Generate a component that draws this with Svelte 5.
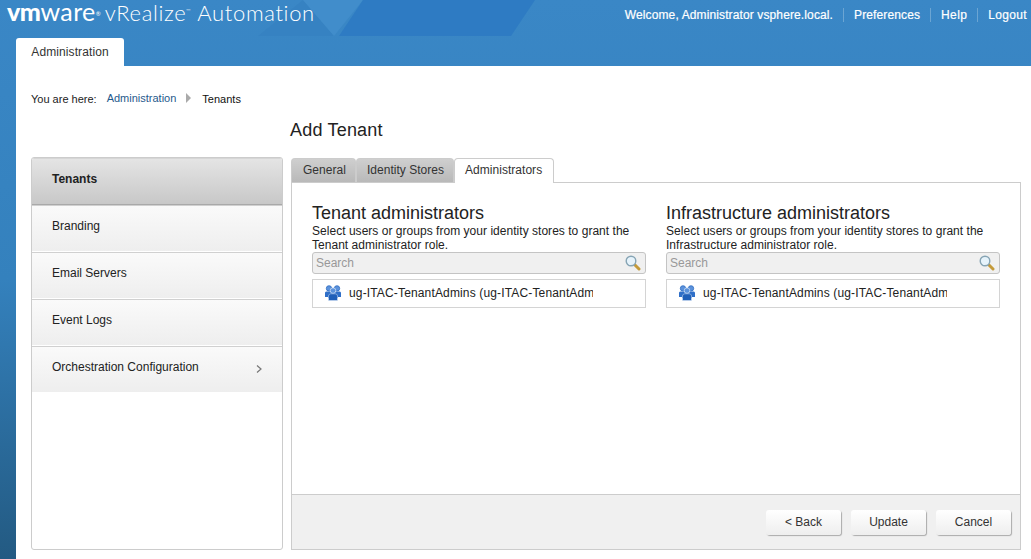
<script>
	const menu = ['Tenants', 'Branding', 'Email Servers', 'Event Logs', 'Orchestration Configuration'];
	const tabs = ['General', 'Identity Stores', 'Administrators'];
	const columns = [
		{ title: 'Tenant administrators', role: 'Tenant' },
		{ title: 'Infrastructure administrators', role: 'Infrastructure' }
	];
</script>

<div class="shell">
	<header class="top">
		<svg class="facets" width="1031" height="66" viewBox="0 0 1031 66">
			<polygon points="258,36 303,0 334,36" fill="#3682c2" />
			<polygon points="303,0 363,0 334,36" fill="#418dcb" />
			<polygon points="363,0 535,0 511,36 339,36" fill="#2e7bc3" />
		</svg>
		<div class="brand">
			<span class="vm">vm</span><span class="ware">ware</span><sup class="reg">®</sup>
			<span class="product">vRealize<sup>™</sup> Automation</span>
		</div>
		<nav class="links">
			<span>Welcome, Administrator vsphere.local.</span>
			<a href="#top">Preferences</a>
			<a href="#top" class="wide">Help</a>
			<a href="#top" class="wide">Logout</a>
		</nav>
		<div class="maintab">Administration</div>
	</header>

	<main class="page">
		<div class="crumbs">
			<span>You are here:</span>
			<a href="#top">Administration</a>
			<i class="crumb-arrow"></i>
			<b>Tenants</b>
		</div>
		<h1>Add Tenant</h1>

		<div class="body">
			<aside class="menu">
				{#each menu as item, i}
					<div class="item" class:active={i === 0} class:last={i === 4}>
						<span>{item}</span>
						{#if i === 4}
							<svg width="6" height="8" viewBox="0 0 6 8"><path d="M1 .5 5 4 1 7.5" fill="none" stroke="#777" stroke-width="1.2" /></svg>
						{/if}
					</div>
				{/each}
			</aside>

			<section class="panel">
				<div class="tabs">
					{#each tabs as tab, i}
						<div class="tab" class:current={i === 2}>{tab}</div>
					{/each}
				</div>
				<div class="card">
					<div class="cols">
						{#each columns as col}
							<div class="col">
								<h2>{col.title}</h2>
								<p>Select users or groups from your identity stores to grant the {col.role} administrator role.</p>
								<div class="search">
									<span>Search</span>
									<svg width="16" height="16" viewBox="0 0 16 16">
										<path d="M9.5 9.5 14 14" stroke="#c49a3a" stroke-width="3" stroke-linecap="round" />
										<circle cx="6" cy="6" r="4.8" fill="#e6f3fb" stroke="#86a4b4" stroke-width="1.4" />
									</svg>
								</div>
								<div class="picked">
									<svg width="16" height="16" viewBox="0 0 16 16">
										<circle cx="4" cy="3.4" r="2.7" fill="#5b92dc" stroke="#2f6cc0" stroke-width=".8" />
										<circle cx="12" cy="3.4" r="2.7" fill="#5b92dc" stroke="#2f6cc0" stroke-width=".8" />
										<path d="M0 12V8C0 6.8 1 6.4 2.5 6.4H13.5C15 6.4 16 6.8 16 8V12H13V13H3V12Z" fill="#2f6fc8" />
										<circle cx="8" cy="5.6" r="2.8" fill="#5b92dc" stroke="#dce9f8" stroke-width=".7" />
										<path d="M3.5 15.5V11C3.5 9.4 5 8.8 6 8.8H10C11 8.8 12.5 9.4 12.5 11V15.5Z" fill="#1f5fb8" stroke="#dce9f8" stroke-width=".5" />
									</svg>
									<span class="name">ug-ITAC-TenantAdmins (ug-ITAC-TenantAdmins)</span>
								</div>
							</div>
						{/each}
					</div>
					<footer class="actions">
						<button>&lt; Back</button>
						<button>Update</button>
						<button>Cancel</button>
					</footer>
				</div>
			</section>
		</div>
	</main>
</div>

<style>
	:global(body) {
		margin: 0;
		background: #fff;
	}

	.shell {
		width: 1031px;
		height: 559px;
		overflow: hidden;
		display: flex;
		flex-direction: column;
		font-family: "Liberation Sans", Arial, sans-serif;
		font-size: 12px;
		color: #222;
		background: linear-gradient(#3a87c6 0, #3481bd 50%, #235a82 100%);
	}

	.top {
		height: 66px;
		flex: none;
		position: relative;
		padding-left: 16px;
		display: flex;
		flex-direction: column;
		justify-content: flex-end;
	}

	.facets {
		position: absolute;
		left: 0;
		top: 0;
	}

	.brand {
		position: absolute;
		left: 7px;
		top: 0;
		height: 28px;
		padding-top: 0;
		display: block;
		line-height: 22px;
		color: #fff;
		white-space: nowrap;
		font-family: Lato, "Noto Sans", sans-serif;
	}

	.vm {
		font-size: 25px;
		font-weight: 900;
		letter-spacing: -0.5px;
	}

	.ware {
		font-size: 25px;
		font-weight: 400;
		letter-spacing: 0.4px;
	}

	.reg {
		font-size: 6px;
		margin-right: 1px;
		line-height: 0;
	}

	.product {
		font-size: 22px;
		font-weight: 300;
		letter-spacing: 0.65px;
	}

	.product sup {
		font-size: 6px;
		line-height: 0;
	}

	.links {
		position: absolute;
		right: 4px;
		top: 8px;
		display: flex;
		align-items: center;
		color: #fff;
		line-height: 14px;
		letter-spacing: 0.12px;
		-webkit-text-stroke: 0.2px #fff;
	}

	.links a {
		color: #fff;
		text-decoration: none;
		margin-left: 10px;
		padding-left: 10px;
		border-left: 1px solid #6ba5d3;
	}

	.links a.wide {
		letter-spacing: 0.35px;
	}

	.maintab {
		width: 108px;
		height: 28px;
		box-sizing: border-box;
		background: #fff;
		border-radius: 3px 3px 0 0;
		text-align: center;
		line-height: 28px;
		color: #333;
		letter-spacing: 0.1px;
	}

	.page {
		flex: 1;
		margin-left: 16px;
		background: #fff;
		display: flex;
		flex-direction: column;
		padding: 0 10px 9px 15px;
		min-height: 0;
	}

	.crumbs {
		display: flex;
		align-items: center;
		margin-top: 26px;
		height: 14px;
		font-size: 11px;
		color: #222;
	}

	.crumbs a {
		color: #1f5a8c;
		text-decoration: none;
		margin-left: 10px;
		position: relative;
		top: -1px;
	}

	.crumb-arrow {
		width: 0;
		height: 0;
		margin: -3px 11px 0 10px;
		border-left: 5px solid #aaa;
		border-top: 5px solid transparent;
		border-bottom: 5px solid transparent;
	}

	.crumbs b {
		font-weight: 400;
		color: #111;
	}

	h1 {
		margin: 13px 0 0 259px;
		font-size: 18px;
		font-weight: 400;
		line-height: 22px;
		color: #222;
		letter-spacing: 0.2px;
	}

	.body {
		flex: 1;
		display: flex;
		gap: 8px;
		margin-top: 17px;
		min-height: 0;
	}

	.menu {
		width: 252px;
		flex: none;
		box-sizing: border-box;
		border: 1px solid #ccc;
		border-radius: 3px;
		overflow: hidden;
		margin-top: -1px;
	}

	.item {
		height: 46px;
		box-sizing: border-box;
		padding: 0 20px 6px;
		border-top: 1px solid #d0d0d0;
		background: linear-gradient(#fafafa, #eee);
		display: flex;
		justify-content: space-between;
		align-items: center;
		margin-bottom: 1px;
	}

	.item.active {
		height: 47px;
		font-weight: 700;
		border-top: 1px solid #d6d6d6;
		border-bottom: 1px solid #a9a9a9;
		background: linear-gradient(#e4e4e4, #c8c8c8);
		margin-bottom: 0;
		padding-bottom: 5px;
	}

	.item.last {
		margin-bottom: 0;
	}

	.item svg {
		margin-top: 5px;
	}

	.panel {
		flex: 1;
		display: flex;
		flex-direction: column;
		min-width: 0;
	}

	.tabs {
		display: flex;
		height: 25px;
		flex: none;
		position: relative;
		z-index: 1;
	}

	.tab {
		box-sizing: border-box;
		height: 24px;
		padding: 0 9px 2px 10px;
		line-height: 22px;
		border: 1px solid #ccc;
		border-bottom: 0;
		border-radius: 4px 4px 0 0;
		background: linear-gradient(#cfcfcf, #b9b9b9);
		color: #333;
		letter-spacing: 0.03px;
	}

	.tab:first-child {
		padding-left: 11px;
	}

	.tab.current {
		height: 25px;
		padding-right: 11px;
		background: #fff;
	}

	.card {
		flex: 1;
		display: flex;
		flex-direction: column;
		border: 1px solid #ccc;
		margin-top: -1px;
		min-height: 0;
	}

	.cols {
		flex: 1;
		display: flex;
		gap: 20px;
		padding: 20px 20px 0;
	}

	.col {
		width: 334px;
	}

	h2 {
		margin: 0;
		font-size: 18px;
		font-weight: 400;
		line-height: 20px;
		color: #222;
	}

	p {
		margin: 1px 0 0;
		line-height: 14px;
		color: #222;
		letter-spacing: 0.03px;
	}

	.search {
		height: 22px;
		box-sizing: border-box;
		background: #f0f0f0;
		border: 1px solid #c4c4c4;
		border-radius: 3px;
		display: flex;
		align-items: center;
		justify-content: space-between;
		padding: 0 4px 0 3px;
		color: #999;
	}

	.picked {
		margin-top: 5px;
		height: 29px;
		box-sizing: border-box;
		border: 1px solid #d4d4d4;
		display: flex;
		align-items: center;
		padding: 0 0 1px 12px;
		gap: 8px;
	}

	.name {
		width: 244px;
		overflow: hidden;
		white-space: nowrap;
		letter-spacing: 0.15px;
	}

	.actions {
		height: 55px;
		flex: none;
		box-sizing: border-box;
		background: #f0f0f0;
		border-top: 1px solid #ccc;
		display: flex;
		justify-content: flex-end;
		gap: 10px;
		padding: 15px 9px 0 0;
	}

	button {
		width: 75px;
		height: 25px;
		font: inherit;
		color: #333;
		border: 0;
		border-radius: 3px;
		padding: 0 0 2px;
		background: linear-gradient(#fff, #eee);
		box-shadow: 1px 1px 1px #aaa;
	}
</style>
